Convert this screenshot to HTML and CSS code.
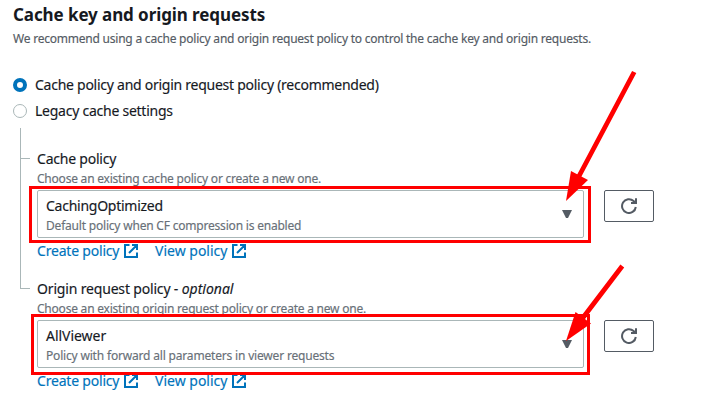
FILE: index.html
```
<!DOCTYPE html>
<html lang="en">
<head>
<meta charset="utf-8">
<title>Cache key and origin requests</title>
<link rel="stylesheet" href="styles.css">
</head>
<body>
<svg class="defs" width="0" height="0" aria-hidden="true">
  <symbol id="external" viewBox="0 0 14 14">
    <path d="M5.5 1H1v12h12V8.5M8 1h5v5M13 1 5 9"/>
  </symbol>
  <symbol id="refresh" viewBox="0 0 16 16">
    <path d="M14.8 9A6.9 6.9 0 1 1 12.6 3L14.8 5M15 .2V5H10"/>
  </symbol>
</svg>
<main class="panel">
  <h2 class="title">Cache key and origin requests</h2>
  <p class="intro">We recommend using a cache policy and origin request policy to control the cache key and origin requests.</p>
  <div class="radios">
    <div class="radio"><span class="dot checked"></span><span class="text radio-text">Cache policy and origin request policy (recommended)</span></div>
    <div class="radio"><span class="dot"></span><span class="text legacy">Legacy cache settings</span></div>
  </div>
  <div class="tree">
    <section class="field">
      <div class="label">Cache policy</div>
      <div class="hint">Choose an existing cache policy or create a new one.</div>
      <div class="row">
        <div class="select">
          <div class="choice"><div class="value">CachingOptimized</div><div class="detail">Default policy when CF compression is enabled</div></div>
          <span class="caret"></span>
        </div>
        <button class="refresh" aria-label="Refresh"><svg width="16" height="16"><use href="#refresh"/></svg></button>
      </div>
      <div class="links">
        <a class="create">Create policy<svg width="14" height="14"><use href="#external"/></svg></a>
        <a class="view">View policy<svg width="14" height="14"><use href="#external"/></svg></a>
      </div>
    </section>
    <section class="field last">
      <div class="label"><span class="wide">Origin request policy - </span><i>optional</i></div>
      <div class="hint">Choose an existing origin request policy or create a new one.</div>
      <div class="row">
        <div class="select">
          <div class="choice"><div class="value short">AllViewer</div><div class="detail forward">Policy with forward all parameters in viewer requests</div></div>
          <span class="caret"></span>
        </div>
        <button class="refresh" aria-label="Refresh"><svg width="16" height="16"><use href="#refresh"/></svg></button>
      </div>
      <div class="links">
        <a class="create">Create policy<svg width="14" height="14"><use href="#external"/></svg></a>
        <a class="view">View policy<svg width="14" height="14"><use href="#external"/></svg></a>
      </div>
    </section>
  </div>
</main>
<svg class="marks" width="717" height="406" viewBox="0 0 717 406" aria-hidden="true">
  <rect x="30.5" y="187.5" width="559" height="54"/>
  <rect x="32.5" y="315.5" width="556" height="58"/>
  <path d="M634.2 72 578 178M622.3 266 582 319"/>
  <polygon points="566,201 571,171 588,180"/>
  <polygon points="566,341 575.5,312 591,323.5"/>
</svg>
</body>
</html>
```
FILE: styles.css
```
* { box-sizing: border-box; }
body {
  margin: 0;
  width: 717px;
  height: 406px;
  overflow: hidden;
  position: relative;
  background: #fff;
  color: #16191f;
  font: 14px/22px "Noto Sans", sans-serif;
  -webkit-text-stroke: 0.15px currentColor;
}
.defs { display: block; }
.panel { padding: 4px 0 0 13px; }
.title { margin: 0; font-size: 17px; line-height: 22px; font-weight: 700; letter-spacing: -0.09px; -webkit-text-stroke: 0; }
.intro { margin: 5px 0 0; font-size: 12px; line-height: 16px; letter-spacing: -0.22px; color: #545b64; white-space: nowrap; }
.radios { margin-top: 27px; display: grid; gap: 4px; }
.radio { display: flex; align-items: center; gap: 8px; height: 22px; white-space: nowrap; }
.dot { width: 14px; height: 14px; border: 1px solid #aab7b8; border-radius: 50%; }
.dot.checked { border: 4px solid #0073bb; }
.radio-text { letter-spacing: -0.26px; }
.legacy { letter-spacing: -0.25px; }
.tree { margin: 6px 0 0 7px; }
.field {
  height: 130px;
  padding: 20px 0 0 16px;
  border-left: 1px solid #aab7b8;
  background: linear-gradient(#aab7b8, #aab7b8) 0 30px / 9px 1px no-repeat;
}
.field.last {
  border-left-color: transparent;
  background: linear-gradient(#aab7b8, #aab7b8) 0 30px / 10px 1px no-repeat, linear-gradient(#aab7b8, #aab7b8) 0 0 / 1px 31px no-repeat;
  background-origin: border-box;
}
.label { height: 22px; letter-spacing: -0.22px; white-space: nowrap; }
.wide { letter-spacing: -0.17px; }
.label i { letter-spacing: 0; }
.hint { margin-top: 1px; height: 16px; font-size: 12px; line-height: 16px; letter-spacing: -0.22px; color: #687078; }
.row { display: flex; gap: 20px; margin-top: 3px; }
.select {
  width: 547px;
  height: 48px;
  padding: 4px 11px 0 8px;
  border: 1px solid #aab7b8;
  border-radius: 2px;
  display: flex;
  justify-content: space-between;
}
.value { letter-spacing: -0.26px; }
.value.short { letter-spacing: -0.03px; }
.detail { margin-top: 1px; font-size: 12px; line-height: 16px; letter-spacing: -0.2px; color: #687078; }
.detail.forward { letter-spacing: -0.18px; }
.caret { width: 10px; height: 8px; margin-top: 15px; background: #545b64; clip-path: polygon(0 0, 100% 0, 60% 100%, 40% 100%); }
.refresh {
  width: 50px;
  height: 32px;
  padding: 0;
  border: 1px solid #545b64;
  border-radius: 2px;
  background: #fff;
  display: grid;
  place-items: center;
}
.refresh svg { fill: none; stroke: #545b64; stroke-width: 2; }
.links { display: flex; gap: 17px; margin-top: 2px; color: #0073bb; white-space: nowrap; }
.links a { display: flex; align-items: center; justify-content: space-between; }
.create { width: 101px; letter-spacing: -0.2px; }
.view { width: 91px; }
.links svg { fill: none; stroke: #0073bb; stroke-width: 2; }
.marks { position: absolute; left: 0; top: 0; fill: none; stroke: #f00; stroke-width: 3; }
.marks path { stroke-width: 4.8; }
.marks polygon { fill: #f00; stroke: none; }
```
